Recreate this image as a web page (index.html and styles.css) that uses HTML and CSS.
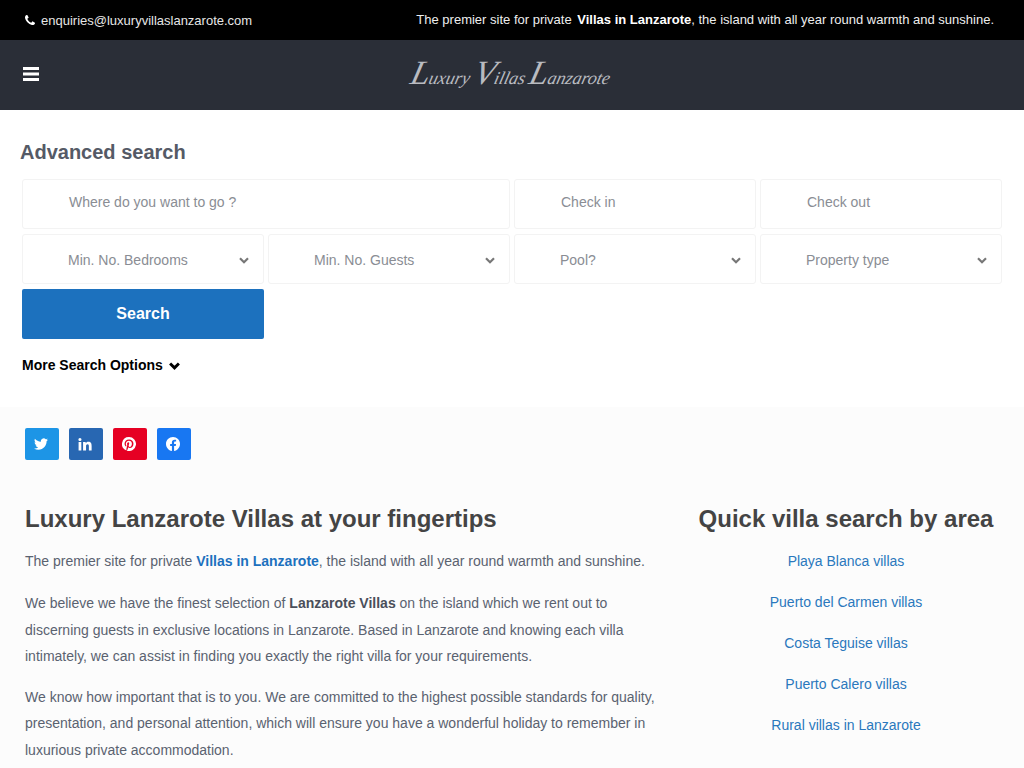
FILE: index.html
```html
<!DOCTYPE html>
<html lang="en">
<head>
<meta charset="utf-8">
<title>Luxury Villas Lanzarote</title>
<link rel="stylesheet" href="styles.css">
</head>
<body>
<div class="topbar">
  <a class="top-mail"><svg class="ico-phone" viewBox="0 0 1408 1408"><path d="M1408 1112q0 27-10 70.500t-21 68.500q-21 50-122 106-94 51-186 51-27 0-53-3.500t-57.500-12.500-47-14.500-55-20.500-48.500-18q-98-35-175-83-127-79-264-216t-216-264q-48-77-83-175-3-9-18-48.500t-20.500-55-14.500-47-12.500-57.500-3.500-53q0-92 51-186 56-101 106-122 25-11 68.500-21t70.500-10q14 0 21 3 18 6 53 76 11 19 30 54t35 63.500 31 53.500q3 4 17.500 25t21.500 35.500 7 28.500q0 20-28.500 50t-62 55-62 53-28.500 46q0 9 5 22.500t8.500 20.500 14 24 11.500 19q76 137 174 235t235 174q2 1 19 11.500t24 14 20.500 8.500 22.500 5q18 0 46-28.500t53-62 55-62 50-28.500q14 0 28.500 7t35.500 21.500 25 17.500q25 15 53.500 31t63.500 35 54 30q70 35 76 53 3 7 3 21z"/></svg>enquiries@luxuryvillaslanzarote.com</a>
  <p class="top-tag">The premier site for private <strong>Villas in Lanzarote</strong>, the island with all year round warmth and sunshine.</p>
</div>
<header class="navbar">
  <svg class="ico-bars" viewBox="0 0 16 14"><path d="M0 0h16v3H0zM0 5.500h16v3H0zM0 11h16v3H0z"/></svg>
  <a class="logo"><span class="cap">L</span>uxury <span class="cap">V</span>illas <span class="cap">L</span>anzarote</a>
</header>
<section class="search">
  <h2 class="search-title">Advanced search</h2>
  <form class="search-grid">
    <div class="field span2 text">Where do you want to go ?</div>
    <div class="field text">Check in</div>
    <div class="field text">Check out</div>
    <div class="field select">Min. No. Bedrooms<svg class="chev" viewBox="0 0 10 7"><path d="M1 1.200 5 5.200 9 1.200"/></svg></div>
    <div class="field select">Min. No. Guests<svg class="chev" viewBox="0 0 10 7"><path d="M1 1.200 5 5.200 9 1.200"/></svg></div>
    <div class="field select">Pool?<svg class="chev" viewBox="0 0 10 7"><path d="M1 1.200 5 5.200 9 1.200"/></svg></div>
    <div class="field select">Property type<svg class="chev" viewBox="0 0 10 7"><path d="M1 1.200 5 5.200 9 1.200"/></svg></div>
    <button class="search-btn" type="button">Search</button>
  </form>
  <a class="more">More Search Options<svg class="chev-black" viewBox="0 0 10 7"><path d="M1 1.200 5 5.200 9 1.200"/></svg></a>
</section>
<main class="content">
  <div class="share">
    <a class="sq tw"><svg viewBox="0 0 24 24"><path d="M23.950 4.570a10 10 0 0 1-2.820.770 4.960 4.960 0 0 0 2.160-2.720c-.950.550-2 .950-3.130 1.180a4.920 4.920 0 0 0-8.380 4.480C7.690 8.090 4.070 6.130 1.640 3.160a4.820 4.820 0 0 0-.67 2.480c0 1.710.87 3.210 2.190 4.100a4.900 4.900 0 0 1-2.230-.620v.060a4.920 4.920 0 0 0 3.950 4.830 5 5 0 0 1-2.210.080 4.940 4.940 0 0 0 4.600 3.420A9.870 9.870 0 0 1 0 19.540a14 14 0 0 0 7.560 2.210c9.050 0 14-7.500 14-13.980 0-.210 0-.420-.020-.630a9.940 9.940 0 0 0 2.460-2.550z"/></svg></a>
    <a class="sq li"><svg viewBox="0 0 24 24"><path d="M1 8.500h4.700V23H1zM3.350 1.500a2.700 2.700 0 1 1 0 5.400 2.700 2.700 0 0 1 0-5.400zM8.700 8.500h4.500v2h.060c.630-1.190 2.160-2.400 4.450-2.400 4.760 0 5.640 3.100 5.640 7.200V23h-4.700v-6.800c0-1.620-.030-3.700-2.250-3.700-2.260 0-2.600 1.760-2.600 3.580V23H8.700z"/></svg></a>
    <a class="sq pi"><svg viewBox="0 0 24 24"><path d="M12 0a12 12 0 0 0-4.370 23.170c-.100-.950-.200-2.400.040-3.440l1.400-5.960s-.360-.720-.360-1.780c0-1.670.970-2.910 2.170-2.910 1.020 0 1.520.770 1.520 1.690 0 1.030-.650 2.570-.990 4-.280 1.190.600 2.170 1.780 2.170 2.130 0 3.770-2.250 3.770-5.490 0-2.870-2.060-4.880-5.010-4.880-3.410 0-5.410 2.560-5.410 5.200 0 1.030.400 2.140.890 2.740.100.120.110.220.080.340l-.330 1.360c-.050.220-.170.270-.400.160-1.500-.700-2.430-2.890-2.430-4.650 0-3.780 2.750-7.260 7.920-7.260 4.160 0 7.390 2.970 7.390 6.930 0 4.130-2.610 7.460-6.220 7.460-1.220 0-2.360-.630-2.750-1.380l-.750 2.850c-.270 1.040-1 2.350-1.490 3.140A12 12 0 1 0 12 0z"/></svg></a>
    <a class="sq fb"><svg viewBox="0 0 24 24"><path d="M24 12.070C24 5.400 18.630 0 12 0S0 5.400 0 12.070c0 6.030 4.390 11.020 10.130 11.930v-8.440H7.080v-3.490h3.050V9.410c0-3.020 1.790-4.700 4.530-4.700 1.310 0 2.690.240 2.690.240v2.970h-1.510c-1.490 0-1.960.930-1.960 1.890v2.260h3.330l-.530 3.490h-2.800V24C19.610 23.090 24 18.100 24 12.070z"/></svg></a>
  </div>
  <div class="columns">
    <article class="intro">
      <h1>Luxury Lanzarote Villas at your fingertips</h1>
      <p class="lead">The premier site for private <a class="bluelink">Villas in Lanzarote</a>, the island with all year round warmth and sunshine.</p>
      <p>We believe we have the finest selection of <strong>Lanzarote Villas</strong> on the island which we rent out to discerning guests in exclusive locations in Lanzarote. Based in Lanzarote and knowing each villa intimately, we can assist in finding you exactly the right villa for your requirements.</p>
      <p>We know how important that is to you. We are committed to the highest possible standards for quality, presentation, and personal attention, which will ensure you have a wonderful holiday to remember in luxurious private accommodation.</p>
    </article>
    <aside class="areas">
      <h2>Quick villa search by area</h2>
      <ul>
        <li><a>Playa Blanca villas</a></li>
        <li><a>Puerto del Carmen villas</a></li>
        <li><a>Costa Teguise villas</a></li>
        <li><a>Puerto Calero villas</a></li>
        <li><a>Rural villas in Lanzarote</a></li>
      </ul>
    </aside>
  </div>
</main>
</body>
</html>
```

FILE: styles.css
```css
* { box-sizing: border-box; }
html, body { margin: 0; padding: 0; height: 768px; overflow: hidden; }
body { font-family: "Liberation Sans", Arial, sans-serif; font-size: 14px; color: #5a6270; background: #fff; }
.topbar { height: 40px; background: #000; color: #fff; display: flex; justify-content: space-between; align-items: center; padding: 0 30px 0 25px; font-size: 13px; }
.top-mail { display: flex; align-items: center; color: #e6e6e6; }
.ico-phone { width: 10px; height: 10px; fill: #fff; margin-right: 6px; }
.top-tag { margin: 0 0 2px; color: #eee; }
.top-tag strong { margin-left: 2px; color: #fff; }
.navbar { height: 70px; background: #2a2e37; display: flex; align-items: center; justify-content: center; position: relative; }
.ico-bars { position: absolute; left: 23px; top: 27px; width: 16px; height: 14px; fill: #fff; }
.logo { font-family: "Liberation Serif", serif; font-style: italic; font-size: 18px; line-height: 30px; color: #b9bbc0; transform: skewX(-14deg); margin-left: -3px; letter-spacing: 0; word-spacing: -1px; }
.cap { font-size: 34px; font-weight: normal; }
.search { height: 297px; padding: 31px 22px 0; }
.search-title { margin: 0 0 15px -2px; font-size: 20px; line-height: 23px; color: #555a66; }
.search-grid { display: grid; grid-template-columns: repeat(4, 242px); grid-template-rows: repeat(3, 50px); gap: 5px 4px; }
.field { border: 1px solid #f3f3f3; border-radius: 3px; padding-left: 46px; display: flex; align-items: center; color: #8a8d94; font-size: 14px; background: #fff; position: relative; }
.field.text { padding-bottom: 4px; }
.span2 { grid-column: span 2; }
.select { padding-left: 45px; padding-top: 2px; }
.chev { position: absolute; right: 14px; top: 22px; width: 10px; height: 7px; fill: none; stroke: #777; stroke-width: 2.200; }
.search-btn { border: 0; border-radius: 2px; background: #1c71be; color: #fff; font: bold 16px "Liberation Sans", Arial, sans-serif; }
.more { display: flex; align-items: center; margin-top: 18px; color: #000; font-weight: bold; line-height: 16px; }
.chev-black { width: 11px; height: 8px; margin-left: 6px; margin-top: 2px; fill: none; stroke: #000; stroke-width: 2.600; }
.content { height: 361px; background: #fcfcfc; padding: 21px 25px 0; }
.share { display: flex; gap: 10px; }
.sq { width: 34px; height: 32px; border-radius: 2px; display: flex; align-items: center; justify-content: center; padding-right: 2px; }
.sq svg { width: 14px; height: 14px; fill: #fff; }
.tw { background: #1d95e6; }
.li { background: #2867b2; }
.pi { background: #e60023; }
.fb { background: #1877f2; }
.columns { display: flex; margin-top: 41px; }
.intro { width: 640px; flex: none; }
.intro h1 { margin: 0 0 11px; font-size: 24px; line-height: 36px; color: #444; }
.intro p { margin: 0 0 15px; line-height: 26.250px; }
.intro p.lead { margin-bottom: 16px; }
.intro strong { color: #4a4f5a; }
.bluelink { color: #1c71be; font-weight: bold; }
.areas { width: 334px; margin-left: 14px; text-align: center; flex: none; }
.areas h2 { margin: 0 0 11px; font-size: 24px; line-height: 36px; color: #444; }
.areas ul { list-style: none; margin: 0; padding: 0; }
.areas li { line-height: 26px; margin-bottom: 15px; }
.areas a { color: #2a78bd; }
```
